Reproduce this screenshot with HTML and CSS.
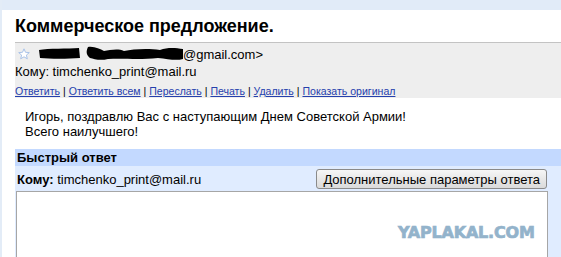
FILE: index.html
```html
<!DOCTYPE html>
<html lang="ru">
<head>
<meta charset="utf-8">
<link rel="stylesheet" href="styles.css">
</head>
<body>
<div class="topbar"></div>
<div class="page">
  <h1 class="subject">Коммерческое предложение.</h1>
  <div class="msg">
    <div class="msg-head">
      <div class="from">
        <svg class="star" width="12" height="12" viewBox="0 0 12 12"><path d="M6 .8l1.5 3.5 3.8.3-2.9 2.5.9 3.7L6 8.8 2.7 10.8l.9-3.7L.7 4.6l3.8-.3z" fill="#fff" stroke="#a9c2e8" stroke-width="1"/></svg>
        <svg class="blot" width="146" height="16" viewBox="0 0 146 16"><path d="M1 4 C10 2 30 3 41 2 L42 12 C30 13 12 13 2 12 Z M50 1 C56 0 62 3 66 5 C72 4 80 2 86 5 C95 3 110 2 122 4 C130 1 138 2 145 3 L145 13 C138 15 130 13 120 12 C100 14 85 12 70 13 C62 15 56 13 52 12 C48 9 48 5 50 1 Z" fill="#000"/></svg><span>@gmail.com&gt;</span>
      </div>
      <div class="to">Кому: timchenko_print@mail.ru</div>
      <div class="actions"><a>Ответить</a> | <a>Ответить всем</a> | <a>Переслать</a> | <a>Печать</a> | <a>Удалить</a> | <a>Показать оригинал</a></div>
    </div>
    <div class="msg-body">
      <p>Игорь, поздравлю Вас с наступающим Днем Советской Армии!<br>Всего наилучшего!</p>
    </div>
    <div class="reply">
      <div class="reply-title">Быстрый ответ</div>
      <div class="reply-to">
        <span><b>Кому:</b> timchenko_print@mail.ru</span>
        <button class="more">Дополнительные параметры ответа</button>
      </div>
      <div class="reply-box">
        <div class="wm">YAPLAKAL.COM</div>
      </div>
    </div>
  </div>
</div>
</body>
</html>
```

FILE: styles.css
```css
html, body { margin: 0; padding: 0; }
body {
  width: 561px; height: 257px; overflow: hidden;
  font-family: Arial, "Liberation Sans", sans-serif;
  font-size: 13px; color: #000; background: #fff;
  border-left: 2px solid #e3ecf7;
  box-sizing: border-box;
}
.topbar { height: 10px; background: #e1ebf8; margin-left: -2px; }
.page { padding-left: 13px; }
.subject {
  margin: 0; height: 32px; font-size: 18px; font-weight: bold;
  line-height: 32px;
}
.msg-head {
  background: #eeeeee; border-top: 1px solid #c3c3c3;
  padding: 2px 0 0 2px; height: 56px; box-sizing: border-box;
}
.from { display: flex; align-items: center; height: 18px; }
.star { margin-right: 8px; margin-left: 1px; }
.blot { margin-right: -1px; }
.to { height: 16px; line-height: 16px; margin-left: -2px; margin-top: 1px; }
.actions { font-size: 10.55px; margin-top: 5px; margin-left: -2px; color: #000; }
.actions a { color: #2540ad; text-decoration: underline; }
.msg-body { padding: 11px 0 0 10px; height: 51px; box-sizing: border-box; }
.msg-body p { margin: 0; line-height: 15px; }
.reply { background: #e0ecff; height: 108px; overflow: hidden; }
.reply-title {
  background: #c3d9ff; font-weight: bold; height: 17px; line-height: 18px;
  padding-left: 2px;
}
.reply-to {
  display: flex; justify-content: space-between; align-items: center;
  height: 25px; padding: 1px 14px 0 2px; box-sizing: border-box;
}
.more {
  font-family: Arial, "Liberation Sans", sans-serif; font-size: 13px;
  background: linear-gradient(#f6f6f6, #dadada); border: 1px solid #8a8a8a;
  border-radius: 3px; height: 20px; padding: 0 6px; color: #000; line-height: 15px;
}
.reply-box {
  position: relative; margin-left: 1px; width: 532px; height: 80px;
  background: #fff; border: 1px solid #a6a6a6; box-sizing: border-box;
}
.wm {
  position: absolute; left: 381px; top: 32px;
  font-family: "DejaVu Sans", sans-serif; font-weight: bold; font-size: 16px;
  color: #93b3cb; letter-spacing: -0.2px; -webkit-text-stroke: 0.7px #93b3cb;
  line-height: 18px;
}
```
